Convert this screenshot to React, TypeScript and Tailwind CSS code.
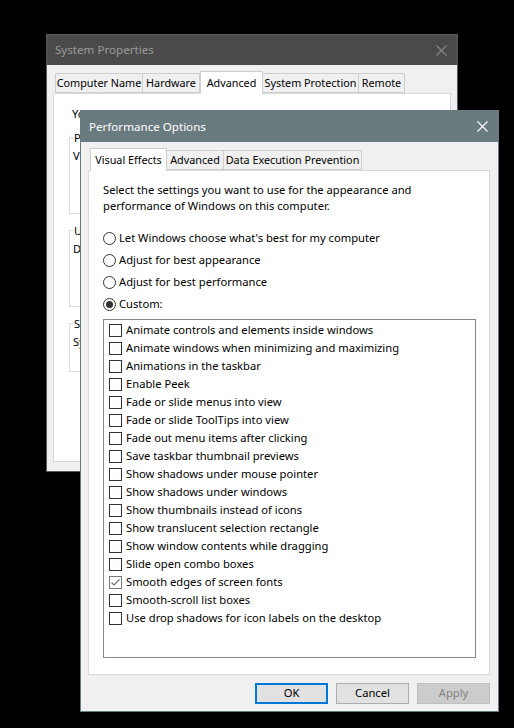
import React from "react";

const font = { fontFamily: '"Noto Sans", "Liberation Sans", sans-serif' };

const items: [string, boolean][] = [
  ["Animate controls and elements inside windows", false],
  ["Animate windows when minimizing and maximizing", false],
  ["Animations in the taskbar", false],
  ["Enable Peek", false],
  ["Fade or slide menus into view", false],
  ["Fade or slide ToolTips into view", false],
  ["Fade out menu items after clicking", false],
  ["Save taskbar thumbnail previews", false],
  ["Show shadows under mouse pointer", false],
  ["Show shadows under windows", false],
  ["Show thumbnails instead of icons", false],
  ["Show translucent selection rectangle", false],
  ["Show window contents while dragging", false],
  ["Slide open combo boxes", false],
  ["Smooth edges of screen fonts", true],
  ["Smooth-scroll list boxes", false],
  ["Use drop shadows for icon labels on the desktop", false],
];

function CloseX({ color }: { color: string }) {
  return (
    <svg width="11" height="11" viewBox="0 0 11 11">
      <path d="M0.5 0.5L10.5 10.5M10.5 0.5L0.5 10.5" stroke={color} strokeWidth="1.1" />
    </svg>
  );
}

function Radio({ checked, label }: { checked?: boolean; label: string }) {
  return (
    <div className="flex items-center h-[22px]">
      <div className="w-[13px] h-[13px] rounded-full border border-[#333333] bg-white flex items-center justify-center">
        {checked && <div className="w-[7px] h-[7px] rounded-full bg-[#333333]" />}
      </div>
      <span className="ml-[3px] text-[11.2px] text-black leading-none whitespace-nowrap">{label}</span>
    </div>
  );
}

function Check({ checked, label }: { checked: boolean; label: string }) {
  return (
    <div className="flex items-center h-[18px] pl-[5px]">
      <div
        className={
          checked
            ? "w-[13px] h-[13px] border border-[#7a7a7a] bg-white flex items-center justify-center"
            : "w-[13px] h-[13px] border border-[#333333] bg-white"
        }
      >
        {checked && (
          <svg width="11" height="11" viewBox="0 0 11 11">
            <path d="M1.5 5.5L4 8L9.5 2.5" stroke="#6d6d6d" strokeWidth="1.2" fill="none" />
          </svg>
        )}
      </div>
      <span className="ml-[4px] text-[11.2px] text-black leading-none whitespace-nowrap">{label}</span>
    </div>
  );
}

function GroupBox({ title, text, h }: { title: string; text: string; h: number }) {
  return (
    <div className="relative mx-[15px] border border-[#dcdcdc]" style={{ height: h }}>
      <div className="absolute -top-[8px] left-[3px] bg-white px-[1px] text-[11.2px] leading-[16px] text-black whitespace-nowrap">
        {title}
      </div>
      <div className="pt-[10px] pl-[3px] text-[11.2px] leading-[16px] text-black whitespace-nowrap overflow-hidden">
        {text}
      </div>
    </div>
  );
}

function SysTab({ label, selected, w }: { label: string; selected?: boolean; w: number }) {
  return selected ? (
    <div
      className="h-[23px] -mb-px shrink-0 bg-white border border-b-0 border-[#cfcfcf] flex items-center justify-center text-[10.8px] text-black z-10 whitespace-nowrap"
      style={{ width: w }}
    >
      {label}
    </div>
  ) : (
    <div
      className="h-[20px] mt-[3px] shrink-0 bg-[#f0f0f0] border border-[#cfcfcf] -ml-px flex items-center justify-center text-[10.8px] text-black whitespace-nowrap"
      style={{ width: w }}
    >
      {label}
    </div>
  );
}

export default function App() {
  return (
    <div className="relative w-[514px] h-[728px] bg-black overflow-hidden" style={font}>
      {/* System Properties window */}
      <div className="absolute left-[46px] top-[34px] w-[412px] h-[438px] bg-[#f0f0f0] border border-[#5a5a5a] flex flex-col">
        <div className="h-[30px] bg-[#4a4a4a] flex items-center justify-between pl-[8px] pr-[10px] shrink-0">
          <span className="text-[11.6px] text-[#9b9b9b]">System Properties</span>
          <CloseX color="#8a8a8a" />
        </div>
        <div className="flex flex-col px-[6px] pt-[5px] pb-[9px] flex-1">
          <div className="flex items-end pl-[3px] h-[23px]">
            <SysTab label="Computer Name" w={88} />
            <SysTab label="Hardware" w={58} />
            <SysTab label="Advanced" selected w={63} />
            <SysTab label="System Protection" w={97} />
            <SysTab label="Remote" w={47} />
          </div>
          <div className="flex-1 bg-white border border-[#d9d9d9] flex flex-col">
            <div className="pl-[18px] pt-[12px] text-[11.2px] leading-[16px] text-black whitespace-nowrap">
              You must be logged on as an Administrator to make most of these changes.
            </div>
            <div className="mt-[15px] flex flex-col gap-[16px]">
              <GroupBox title="Performance" text="Visual effects, processor scheduling, memory usage and virtual memory" h={77} />
              <GroupBox title="User Profiles" text="Desktop settings related to your sign-in" h={77} />
              <GroupBox title="Startup and Recovery" text="System startup, system failure, and debugging information" h={49} />
            </div>
          </div>
        </div>
      </div>

      {/* Performance Options window */}
      <div className="absolute left-[80px] top-[110px] w-[419px] h-[602px] bg-[#f0f0f0] border border-[#6a7b80] flex flex-col">
        <div className="h-[31px] bg-[#6a7b80] flex items-center justify-between pl-[8px] pr-[10px] shrink-0">
          <span className="text-[11.6px] text-white">Performance Options</span>
          <CloseX color="#ffffff" />
        </div>
        <div className="flex flex-col pl-[7px] pr-[8px] pt-[5px] flex-1">
          <div className="flex items-end pl-[2px] h-[23px]">
            <div className="w-[77px] h-[23px] -mb-px shrink-0 bg-white border border-b-0 border-[#cfcfcf] flex items-center justify-center text-[10.8px] text-black z-10 whitespace-nowrap">
              Visual Effects
            </div>
            <div className="w-[58px] h-[20px] mt-[3px] shrink-0 bg-[#f0f0f0] border border-[#cfcfcf] -ml-px flex items-center justify-center text-[10.8px] text-black whitespace-nowrap">
              Advanced
            </div>
            <div className="w-[139px] h-[20px] mt-[3px] shrink-0 bg-[#f0f0f0] border border-[#cfcfcf] -ml-px flex items-center justify-center text-[10.8px] text-black whitespace-nowrap">
              Data Execution Prevention
            </div>
          </div>
          <div className="h-[505px] bg-white border border-[#d9d9d9] flex flex-col pl-[14px] pr-[13px]">
            <div className="pt-[11px] text-[11.2px] leading-[16px] text-black whitespace-nowrap">
              <div>Select the settings you want to use for the appearance and</div>
              <div>performance of Windows on this computer.</div>
            </div>
            <div className="mt-[13px] flex flex-col">
              <Radio label="Let Windows choose what's best for my computer" />
              <Radio label="Adjust for best appearance" />
              <Radio label="Adjust for best performance" />
              <Radio checked label="Custom:" />
            </div>
            <div className="mt-[4px] h-[339px] border border-[#828790] bg-white pt-[1px]">
              {items.map(([l, c]) => (
                <Check key={l} label={l} checked={c} />
              ))}
            </div>
          </div>
          <div className="flex justify-end gap-[8px] mt-[8px]">
            <div className="w-[73px] h-[21px] bg-[#e1e1e1] border-2 border-[#0078d7] flex items-center justify-center text-[11.2px] text-black">
              OK
            </div>
            <div className="w-[73px] h-[21px] bg-[#e1e1e1] border border-[#adadad] flex items-center justify-center text-[11.2px] text-black">
              Cancel
            </div>
            <div className="w-[73px] h-[21px] bg-[#cccccc] border border-[#bfbfbf] flex items-center justify-center text-[11.2px] text-[#838383]">
              Apply
            </div>
          </div>
        </div>
      </div>
    </div>
  );
}
